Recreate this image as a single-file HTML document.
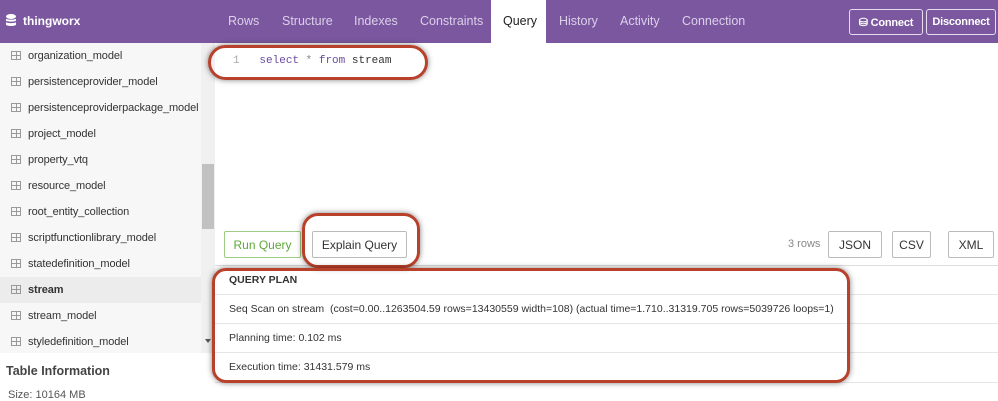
<!DOCTYPE html>
<html><head><style>
*{box-sizing:border-box;margin:0;padding:0}
body{width:998px;height:401px;overflow:hidden;background:#fff;font-family:"Liberation Sans",sans-serif;font-size:12px;color:#333;position:relative}
.hdr{position:absolute;left:0;top:0;width:998px;height:43px;background:#7a579f}
.logo{position:absolute;left:23px;top:14px;color:#fff;font-weight:bold;font-size:12px}
.tab{position:absolute;top:14px;color:#ddd0ea;font-size:12.5px}
.qtab{position:absolute;left:491px;top:0;width:55px;height:44px;background:#fff;color:#222;font-size:12.5px;padding:14px 0 0 12px}
.hbtn{position:absolute;top:9px;height:26px;border:1px solid #e6ddf0;border-radius:3px;color:#fff;font-weight:bold;font-size:11px;padding:6px 0 0 0;text-align:center;letter-spacing:-.2px}
.side{position:absolute;left:0;top:43px;width:201px;height:310px;background:#f7f7f7}
.item{position:absolute;left:0;width:201px;height:26px;padding:7px 0 0 28px;font-size:11px;color:#333;letter-spacing:-.1px}
.item i{position:absolute;left:11px;top:8px;width:10px;height:9px;border:1px solid #999;background:linear-gradient(#999,#999) 0 3px/100% 1px no-repeat,linear-gradient(#999,#999) 4px 0/1px 100% no-repeat}
.sb{position:absolute;left:201px;top:43px;width:14px;height:310px;background:#f0f0f0}
.btn{position:absolute;top:231px;height:27px;border:1px solid #bbb;border-radius:2px;font-size:12px;text-align:center;padding-top:6px;background:#fff}
.row{position:absolute;left:215px;width:783px;border-bottom:1px solid #e6e6e6;padding-left:14px;font-size:10.5px}
.oval{position:absolute;border:3px solid #b8412b;border-radius:16px;box-shadow:0 0 6px rgba(0,0,0,.5)}
</style></head><body>
<div class="hdr">
 <svg style="position:absolute;left:6px;top:14px" width="10" height="13" viewBox="0 0 10 13"><ellipse cx="5" cy="2.5" rx="5" ry="2.5" fill="#fff"/><path d="M0 4.5c0 1.5 10 1.5 10 0v2c0 1.5-10 1.5-10 0zM0 8c0 1.5 10 1.5 10 0v2.5c0 2-10 2-10 0z" fill="#fff"/></svg>
 <div class="logo">thingworx</div>
 <div class="tab" style="left:228px">Rows</div>
 <div class="tab" style="left:282px">Structure</div>
 <div class="tab" style="left:354px">Indexes</div>
 <div class="tab" style="left:420px">Constraints</div>
 <div class="qtab">Query</div>
 <div class="tab" style="left:559px">History</div>
 <div class="tab" style="left:620px">Activity</div>
 <div class="tab" style="left:682px">Connection</div>
 <div class="hbtn" style="left:849px;width:74px">&#9921; Connect</div>
 <div class="hbtn" style="left:926px;width:70px">Disconnect</div>
</div>
<div class="side">
 <div class="item" style="top:0"><i></i>organization_model</div>
 <div class="item" style="top:26px"><i></i>persistenceprovider_model</div>
 <div class="item" style="top:52px"><i></i>persistenceproviderpackage_model</div>
 <div class="item" style="top:78px"><i></i>project_model</div>
 <div class="item" style="top:104px"><i></i>property_vtq</div>
 <div class="item" style="top:130px"><i></i>resource_model</div>
 <div class="item" style="top:156px"><i></i>root_entity_collection</div>
 <div class="item" style="top:182px"><i></i>scriptfunctionlibrary_model</div>
 <div class="item" style="top:208px"><i></i>statedefinition_model</div>
 <div class="item" style="top:234px;background:#ececec;font-weight:bold"><i></i>stream</div>
 <div class="item" style="top:260px"><i></i>stream_model</div>
 <div class="item" style="top:286px"><i></i>styledefinition_model</div>
</div>
<div class="sb"><div style="position:absolute;left:1px;top:121px;width:12px;height:65px;background:#c1c1c1"></div><div style="position:absolute;left:4px;top:296px;border:3px solid transparent;border-top:4px solid #555"></div></div>
<div style="position:absolute;left:6px;top:364px;font-weight:bold;font-size:12.5px;color:#444">Table Information</div>
<div style="position:absolute;left:8px;top:389px;font-size:11px;color:#555">Size: 10164 MB</div>

<div style="position:absolute;left:233px;top:55px;font-family:'Liberation Mono',monospace;font-size:11px"><span style="color:#aaa">1</span>&nbsp;&nbsp;&nbsp;<span style="color:#6a4c9c">select</span> <span style="color:#888">*</span> <span style="color:#6a4c9c">from</span> stream</div>

<div class="btn" style="left:224px;width:77px;border-color:#9ccc85;color:#5fa83a">Run Query</div>
<div class="btn" style="left:312px;width:95px;color:#333">Explain Query</div>
<div style="position:absolute;left:788px;top:238px;font-size:11px;color:#888">3 rows</div>
<div class="btn" style="left:828px;width:54px">JSON</div>
<div class="btn" style="left:892px;width:39px">CSV</div>
<div class="btn" style="left:948px;width:46px">XML</div>
<div style="position:absolute;left:215px;top:265px;width:783px;border-top:1px solid #ddd"></div>
<div class="row" style="top:266px;height:29px;padding-top:8px;font-weight:bold">QUERY PLAN</div>
<div class="row" style="top:295px;height:29px;padding-top:8px;letter-spacing:0">Seq Scan on stream&nbsp; (cost=0.00..1263504.59 rows=13430559 width=108) (actual time=1.710..31319.705 rows=5039726 loops=1)</div>
<div class="row" style="top:324px;height:29px;padding-top:8px">Planning time: 0.102 ms</div>
<div class="row" style="top:353px;height:30px;padding-top:8px">Execution time: 31431.579 ms</div>

<div class="oval" style="left:208px;top:45px;width:220px;height:35px;border-radius:18px"></div>
<div class="oval" style="left:302px;top:213px;width:118px;height:55px;border-radius:16px"></div>
<div class="oval" style="left:212px;top:268px;width:638px;height:115px;border-radius:14px"></div>
</body></html>
